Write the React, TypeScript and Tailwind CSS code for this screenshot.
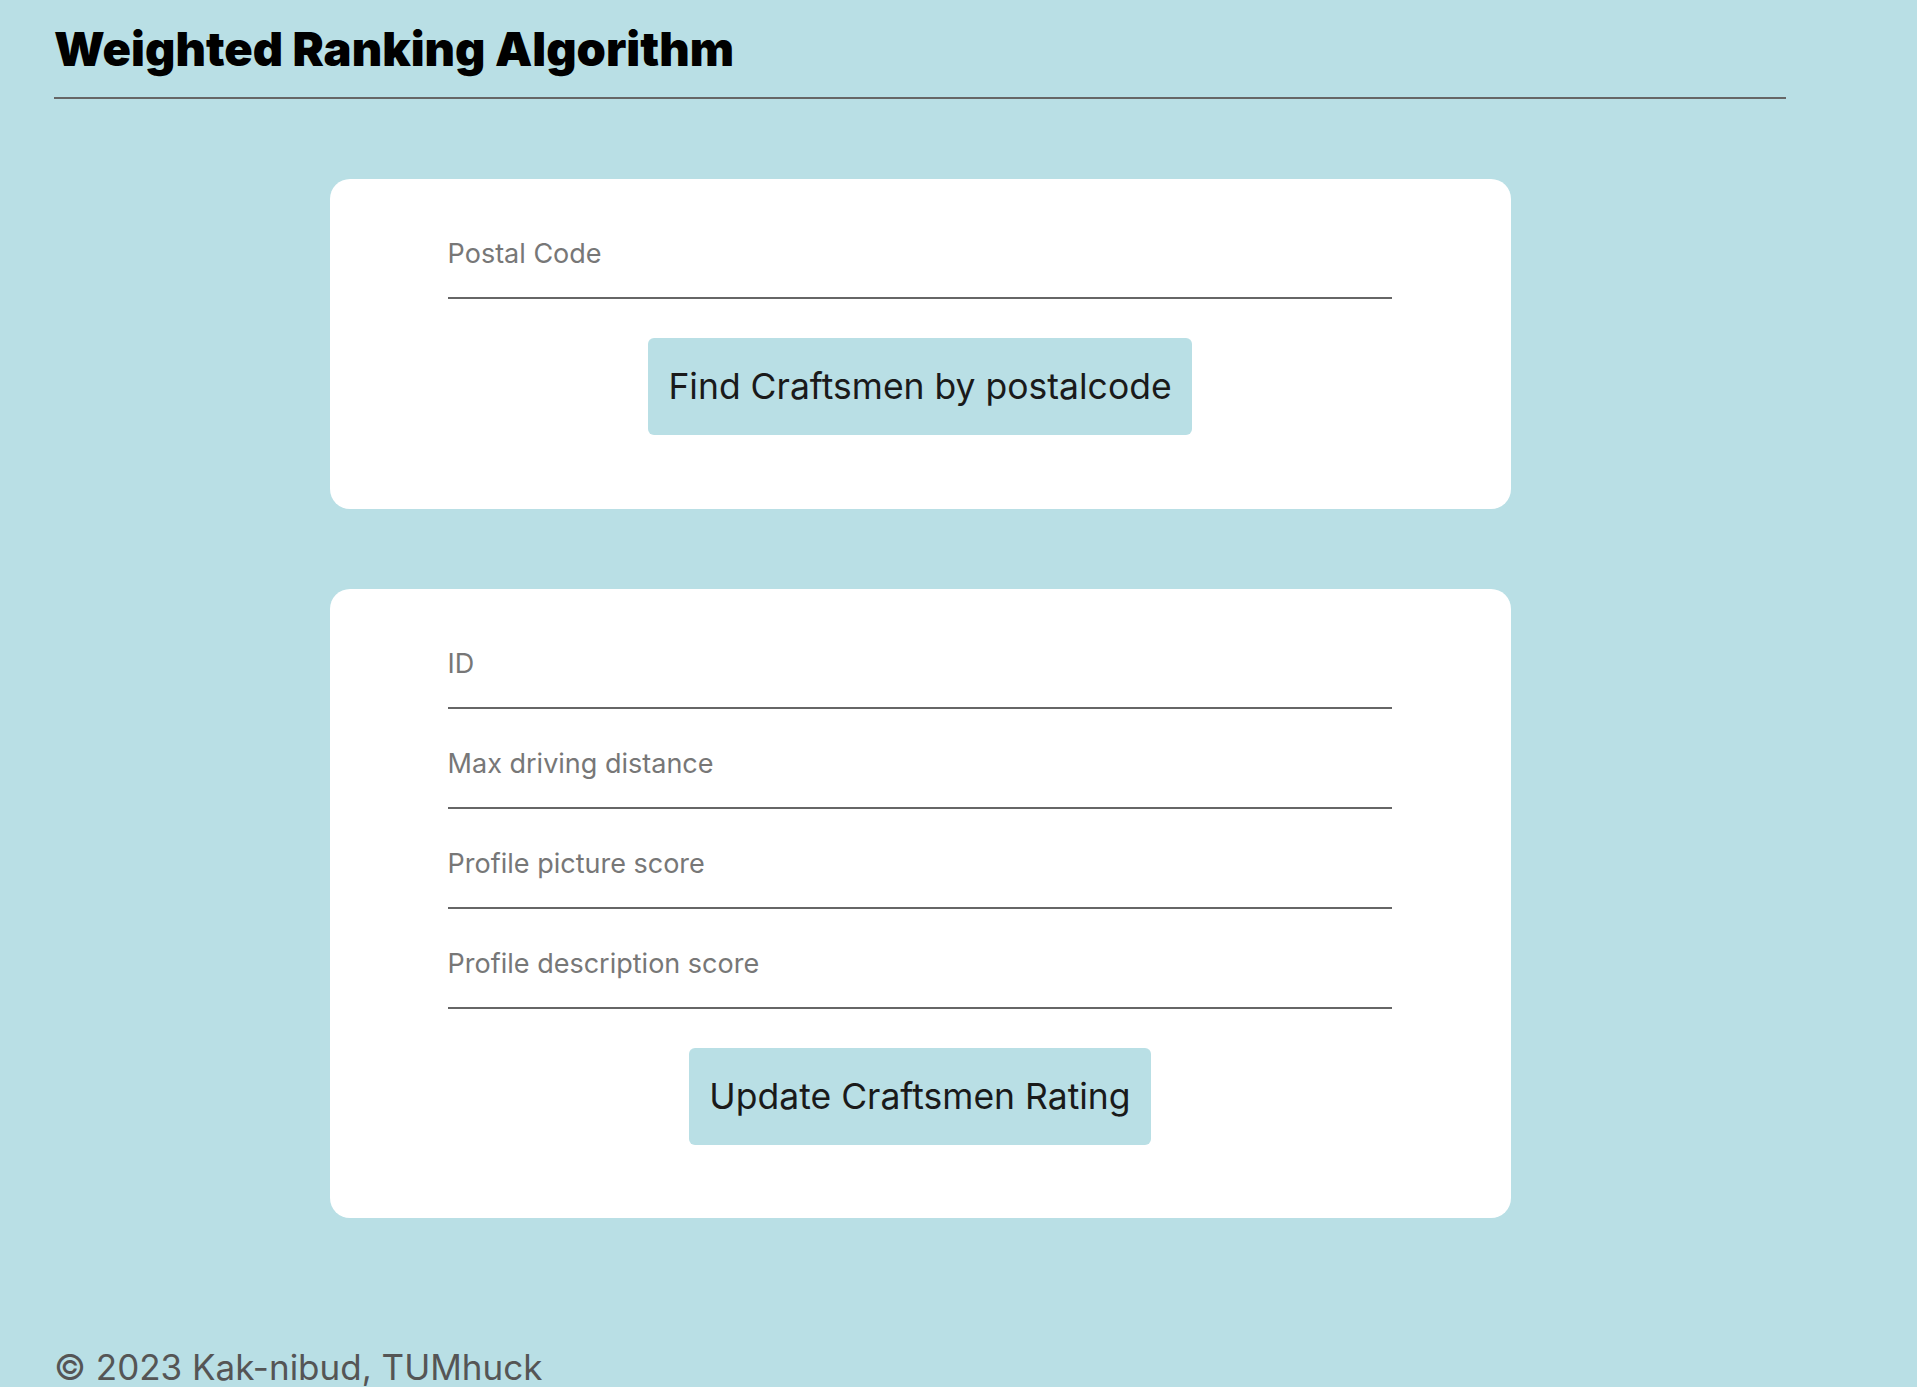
export default function App() {
  return (
    <div className="min-h-screen bg-[#b9dfe5] pl-[54px] pr-[131px] font-['Inter',sans-serif]">
      <header className="pt-[25px]">
        <h1 className="text-[47px] font-black leading-none text-black">Weighted Ranking Algorithm</h1>
        <hr className="mt-[25px] border-0 border-t-2 border-[#666]" />
      </header>

      <main className="mt-[80px] flex flex-col items-center gap-[80px]">
        <section className="w-[1181px] rounded-[20px] bg-white pt-[60px] pb-[74px]">
          <Field placeholder="Postal Code" />
          <div className="mt-[39px] flex justify-center">
            <Button label="Find Craftsmen by postalcode" />
          </div>
        </section>

        <section className="w-[1181px] rounded-[20px] bg-white pt-[60px] pb-[73px]">
          <div className="flex flex-col gap-[40px]">
            <Field placeholder="ID" />
            <Field placeholder="Max driving distance" />
            <Field placeholder="Profile picture score" />
            <Field placeholder="Profile description score" />
          </div>
          <div className="mt-[39px] flex justify-center">
            <Button label="Update Craftsmen Rating" />
          </div>
        </section>
      </main>

      <footer className="mt-[129px] pb-[20px]">
        <p className="text-[35px] leading-[41px] text-[#555]">© 2023 Kak-nibud, TUMhuck</p>
      </footer>
    </div>
  );
}

function Field({ placeholder }: { placeholder: string }) {
  return (
    <input
      type="text"
      placeholder={placeholder}
      className="mx-auto block w-[80%] border-0 border-b-2 border-[#666] bg-transparent pt-0 pb-[28px] text-[27px] leading-[30px] text-[#333] outline-none placeholder:text-[#777]"
    />
  );
}

function Button({ label }: { label: string }) {
  return (
    <button className="h-[97px] rounded-[6px] bg-[#b9dfe5] px-[20px] text-[35.5px] leading-[41px] text-[#1a1a1a]">
      {label}
    </button>
  );
}
